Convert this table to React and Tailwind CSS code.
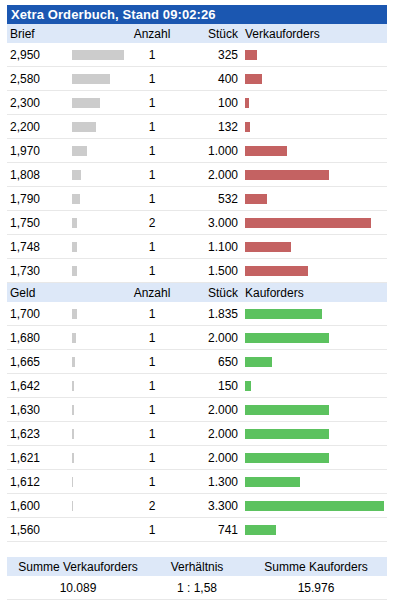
import React from "react";

const ask = [
  { price: "2,950", depth: 52, count: 1, qty: "325", bar: 12 },
  { price: "2,580", depth: 38, count: 1, qty: "400", bar: 17 },
  { price: "2,300", depth: 28, count: 1, qty: "100", bar: 4 },
  { price: "2,200", depth: 24, count: 1, qty: "132", bar: 5 },
  { price: "1,970", depth: 15, count: 1, qty: "1.000", bar: 42 },
  { price: "1,808", depth: 9, count: 1, qty: "2.000", bar: 84 },
  { price: "1,790", depth: 8, count: 1, qty: "532", bar: 22 },
  { price: "1,750", depth: 5, count: 2, qty: "3.000", bar: 126 },
  { price: "1,748", depth: 5, count: 1, qty: "1.100", bar: 46 },
  { price: "1,730", depth: 5, count: 1, qty: "1.500", bar: 63 },
];

const bid = [
  { price: "1,700", depth: 5, count: 1, qty: "1.835", bar: 77 },
  { price: "1,680", depth: 4, count: 1, qty: "2.000", bar: 84 },
  { price: "1,665", depth: 3, count: 1, qty: "650", bar: 27 },
  { price: "1,642", depth: 2, count: 1, qty: "150", bar: 6 },
  { price: "1,630", depth: 2, count: 1, qty: "2.000", bar: 84 },
  { price: "1,623", depth: 2, count: 1, qty: "2.000", bar: 84 },
  { price: "1,621", depth: 2, count: 1, qty: "2.000", bar: 84 },
  { price: "1,612", depth: 1, count: 1, qty: "1.300", bar: 55 },
  { price: "1,600", depth: 1, count: 2, qty: "3.300", bar: 139 },
  { price: "1,560", depth: 0, count: 1, qty: "741", bar: 31 },
];

function HeadRow({ label, side }) {
  return (
    <div className="flex h-[19px] items-center bg-[#dde8f8]">
      <div className="w-[65px] pl-[3px]">{label}</div>
      <div className="w-[60px]" />
      <div className="w-[40px] text-center">Anzahl</div>
      <div className="w-[66px] text-right">Stück</div>
      <div className="pl-[7px]">{side}</div>
    </div>
  );
}

function BookRow({ row, color }) {
  return (
    <div className="flex h-[24px] items-center border-b border-[#e8e8e8]">
      <div className="w-[65px] pl-[3px]">{row.price}</div>
      <div className="w-[60px]">
        <div className="h-[10px] bg-[#cccccc]" style={{ width: row.depth }} />
      </div>
      <div className="w-[40px] text-center">{row.count}</div>
      <div className="w-[66px] text-right">{row.qty}</div>
      <div className="flex-1 pl-[7px]">
        <div className={`h-[10px] ${color}`} style={{ width: row.bar }} />
      </div>
    </div>
  );
}

export default function App() {
  return (
    <div className="h-[604px] w-[394px] bg-white pt-[5px] text-[12px] text-black [font-family:'Liberation_Sans',Arial,sans-serif]">
      <div className="ml-[7px] w-[380px]">
        <div className="flex h-[19px] items-center bg-[#1b57b1] pl-[4px] text-[13px] font-bold tracking-[0.1px] text-white">
          Xetra Orderbuch, Stand 09:02:26
        </div>

        {/* --- Brief --- */}
        <HeadRow label="Brief" side="Verkauforders" />
        {ask.map((r) => (
          <BookRow key={r.price} row={r} color="bg-[#c46262]" />
        ))}

        {/* --- Geld --- */}
        <HeadRow label="Geld" side="Kauforders" />
        {bid.map((r) => (
          <BookRow key={r.price} row={r} color="bg-[#5cc25f]" />
        ))}

        {/* --- Summen --- */}
        <div className="mt-[15px] flex h-[19px] items-center bg-[#dde8f8] text-center">
          <div className="w-[142px]">Summe Verkauforders</div>
          <div className="w-[96px]">Verhältnis</div>
          <div className="w-[142px]">Summe Kauforders</div>
        </div>
        <div className="flex h-[24px] items-center border-b border-[#e8e8e8] text-center">
          <div className="w-[142px]">10.089</div>
          <div className="w-[96px]">1 : 1,58</div>
          <div className="w-[142px]">15.976</div>
        </div>
      </div>
    </div>
  );
}
